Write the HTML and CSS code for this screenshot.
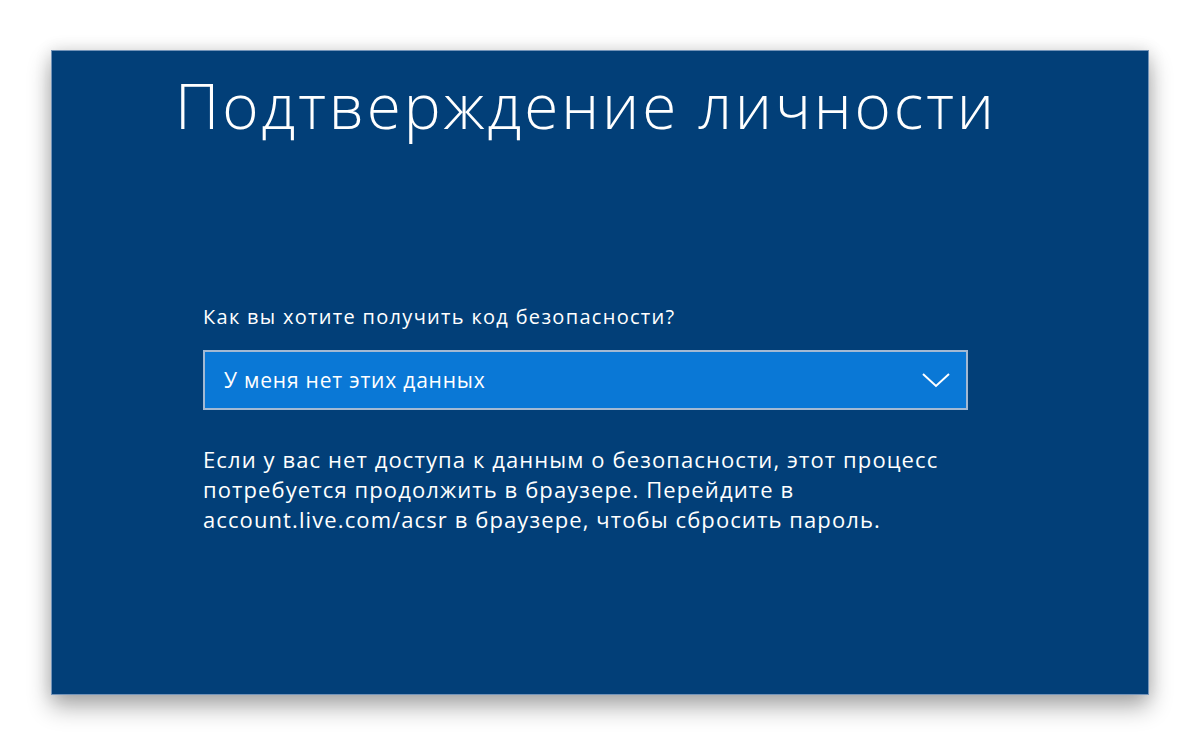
FILE: index.html
```html
<!DOCTYPE html>
<html lang="ru">
<head>
<meta charset="utf-8">
<link rel="stylesheet" href="styles.css">
</head>
<body>
<div class="stage">
  <div class="panel">
    <h1 class="title">Подтверждение личности</h1>
    <div class="form">
      <div class="label">Как вы хотите получить код безопасности?</div>
      <div class="select">
        <span class="select-text">У меня нет этих данных</span>
        <svg class="chev" width="30" height="16" viewBox="0 0 30 16"><path d="M2 2 L15 14 L28 2" fill="none" stroke="#ffffff" stroke-width="2"/></svg>
      </div>
      <p class="info">Если у вас нет доступа к данным о безопасности, этот процесс потребуется продолжить в браузере. Перейдите в account.live.com/acsr в браузере, чтобы сбросить пароль.</p>
    </div>
  </div>
</div>
</body>
</html>
```

FILE: styles.css
```css
html, body {
  margin: 0;
  padding: 0;
  background: #ffffff;
}
.stage {
  width: 1200px;
  height: 747px;
  padding: 50px 0 0 51px;
  box-sizing: border-box;
}
.panel {
  width: 1098px;
  height: 645px;
  box-sizing: border-box;
  background: #023f78;
  border: 1px solid #7393b8;
  box-shadow: 0 12px 22px rgba(0,0,0,0.32), 0 0 16px rgba(0,0,0,0.12);
  color: #ffffff;
  font-family: "Open Sans", "Noto Sans", sans-serif;
}
.title {
  margin: 0;
  padding: 14px 0 0 123px;
  font-weight: 300;
  font-size: 62px;
  line-height: 80px;
  letter-spacing: 2.9px;
}
.form {
  padding: 160px 0 0 151px;
  width: 765px;
}
.label {
  font-size: 20px;
  line-height: 24px;
  letter-spacing: 1.3px;
  margin-bottom: 21px;
}
.select {
  height: 60px;
  box-sizing: border-box;
  border: 2px solid #a3b9d3;
  background: #0a78d6;
  display: flex;
  align-items: center;
  justify-content: space-between;
  padding: 0 15px 0 19px;
}
.select-text {
  font-size: 21px;
  letter-spacing: 0.8px;
}
.chev {
  display: block;
}
.info {
  margin: 34px 0 0 0;
  font-size: 22px;
  line-height: 30px;
  letter-spacing: 1.1px;
  width: 765px;
}
```
